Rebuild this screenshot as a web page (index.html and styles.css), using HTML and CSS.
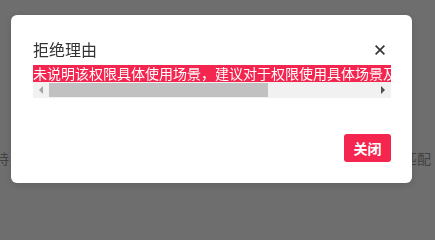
FILE: index.html
```html
<!DOCTYPE html>
<html lang="zh">
<head>
<meta charset="utf-8">
<link rel="stylesheet" href="styles.css">
</head>
<body>
<div class="page">
  <div class="row">
    <span class="cell-left">支持</span>
    <span class="cell-right">匹配</span>
  </div>
</div>
<div class="overlay">
  <div class="modal">
    <div class="modal-header">
      <span class="modal-title">拒绝理由</span>
      <span class="modal-close">
        <svg width="10" height="10" viewBox="0 0 10 10"><path d="M0.6 0.6 L9.4 9.4 M9.4 0.6 L0.6 9.4" stroke="#333" stroke-width="1.6" fill="none"/></svg>
      </span>
    </div>
    <div class="reason"><span class="reason-text">未说明该权限具体使用场景，建议对于权限使用具体场景及使用目的进行详细的说明。</span></div>
    <div class="hscroll">
      <span class="hs-btn">
        <svg width="4" height="8" viewBox="0 0 4 8"><path d="M4 0 L0 4 L4 8 Z" fill="#a3a3a3"/></svg>
      </span>
      <span class="hs-track"><span class="hs-thumb" style="width:219px"></span></span>
      <span class="hs-btn">
        <svg width="4" height="8" viewBox="0 0 4 8"><path d="M0 0 L4 4 L0 8 Z" fill="#505050"/></svg>
      </span>
    </div>
    <div class="modal-footer">
      <button class="btn-close">关闭</button>
    </div>
  </div>
</div>
</body>
</html>
```

FILE: styles.css
```css
html, body {
  margin: 0;
  padding: 0;
  width: 435px;
  height: 201px;
  overflow: hidden;
  font-family: "Noto Sans CJK SC", "Noto Sans", sans-serif;
  background: #fff;
}
.page {
  padding-top: 150px;
}
.row {
  display: flex;
  justify-content: space-between;
  font-size: 14px;
  line-height: 16px;
  color: #999;
}
.cell-left {
  margin-left: -19px;
}
.cell-right {
  margin-right: 4px;
}
.overlay {
  position: fixed;
  inset: 0;
  background: rgba(0, 0, 0, 0.57);
  padding: 15px 0 0 11px;
}
.modal {
  width: 401px;
  height: 168px;
  box-sizing: border-box;
  background: #fff;
  border-radius: 6px;
  padding: 22px 21px 21px 22px;
  display: flex;
  flex-direction: column;
  box-shadow: 0 2px 8px rgba(0, 0, 0, 0.15);
}
.modal-header {
  display: flex;
  align-items: center;
  justify-content: space-between;
  height: 24px;
  margin-bottom: 4px;
}
.modal-title {
  font-size: 16px;
  line-height: 24px;
  color: #333;
}
.modal-close {
  display: flex;
  width: 10px;
  height: 10px;
  margin-right: 6px;
  margin-top: 2px;
}
.reason {
  white-space: nowrap;
  overflow: hidden;
  height: 17px;
  font-size: 14px;
  line-height: 17px;
}
.reason-text {
  display: inline-block;
  height: 17px;
  line-height: 17px;
  vertical-align: top;
  background: #f4264f;
  color: #fff;
}
.hscroll {
  display: flex;
  height: 16px;
  background: #f1f1f1;
}
.hs-btn {
  width: 16px;
  display: flex;
  align-items: center;
  justify-content: center;
}
.hs-track {
  flex: 1;
  display: flex;
  align-items: center;
}
.hs-thumb {
  height: 14px;
  background: #c1c1c1;
}
.modal-footer {
  margin-top: auto;
  display: flex;
  justify-content: flex-end;
}
.btn-close {
  width: 47px;
  height: 28px;
  border: none;
  border-radius: 3px;
  background: #f4264f;
  color: #fff;
  font-family: "Noto Sans CJK SC", sans-serif;
  font-size: 14px;
  font-weight: bold;
  padding: 0;
}
```
